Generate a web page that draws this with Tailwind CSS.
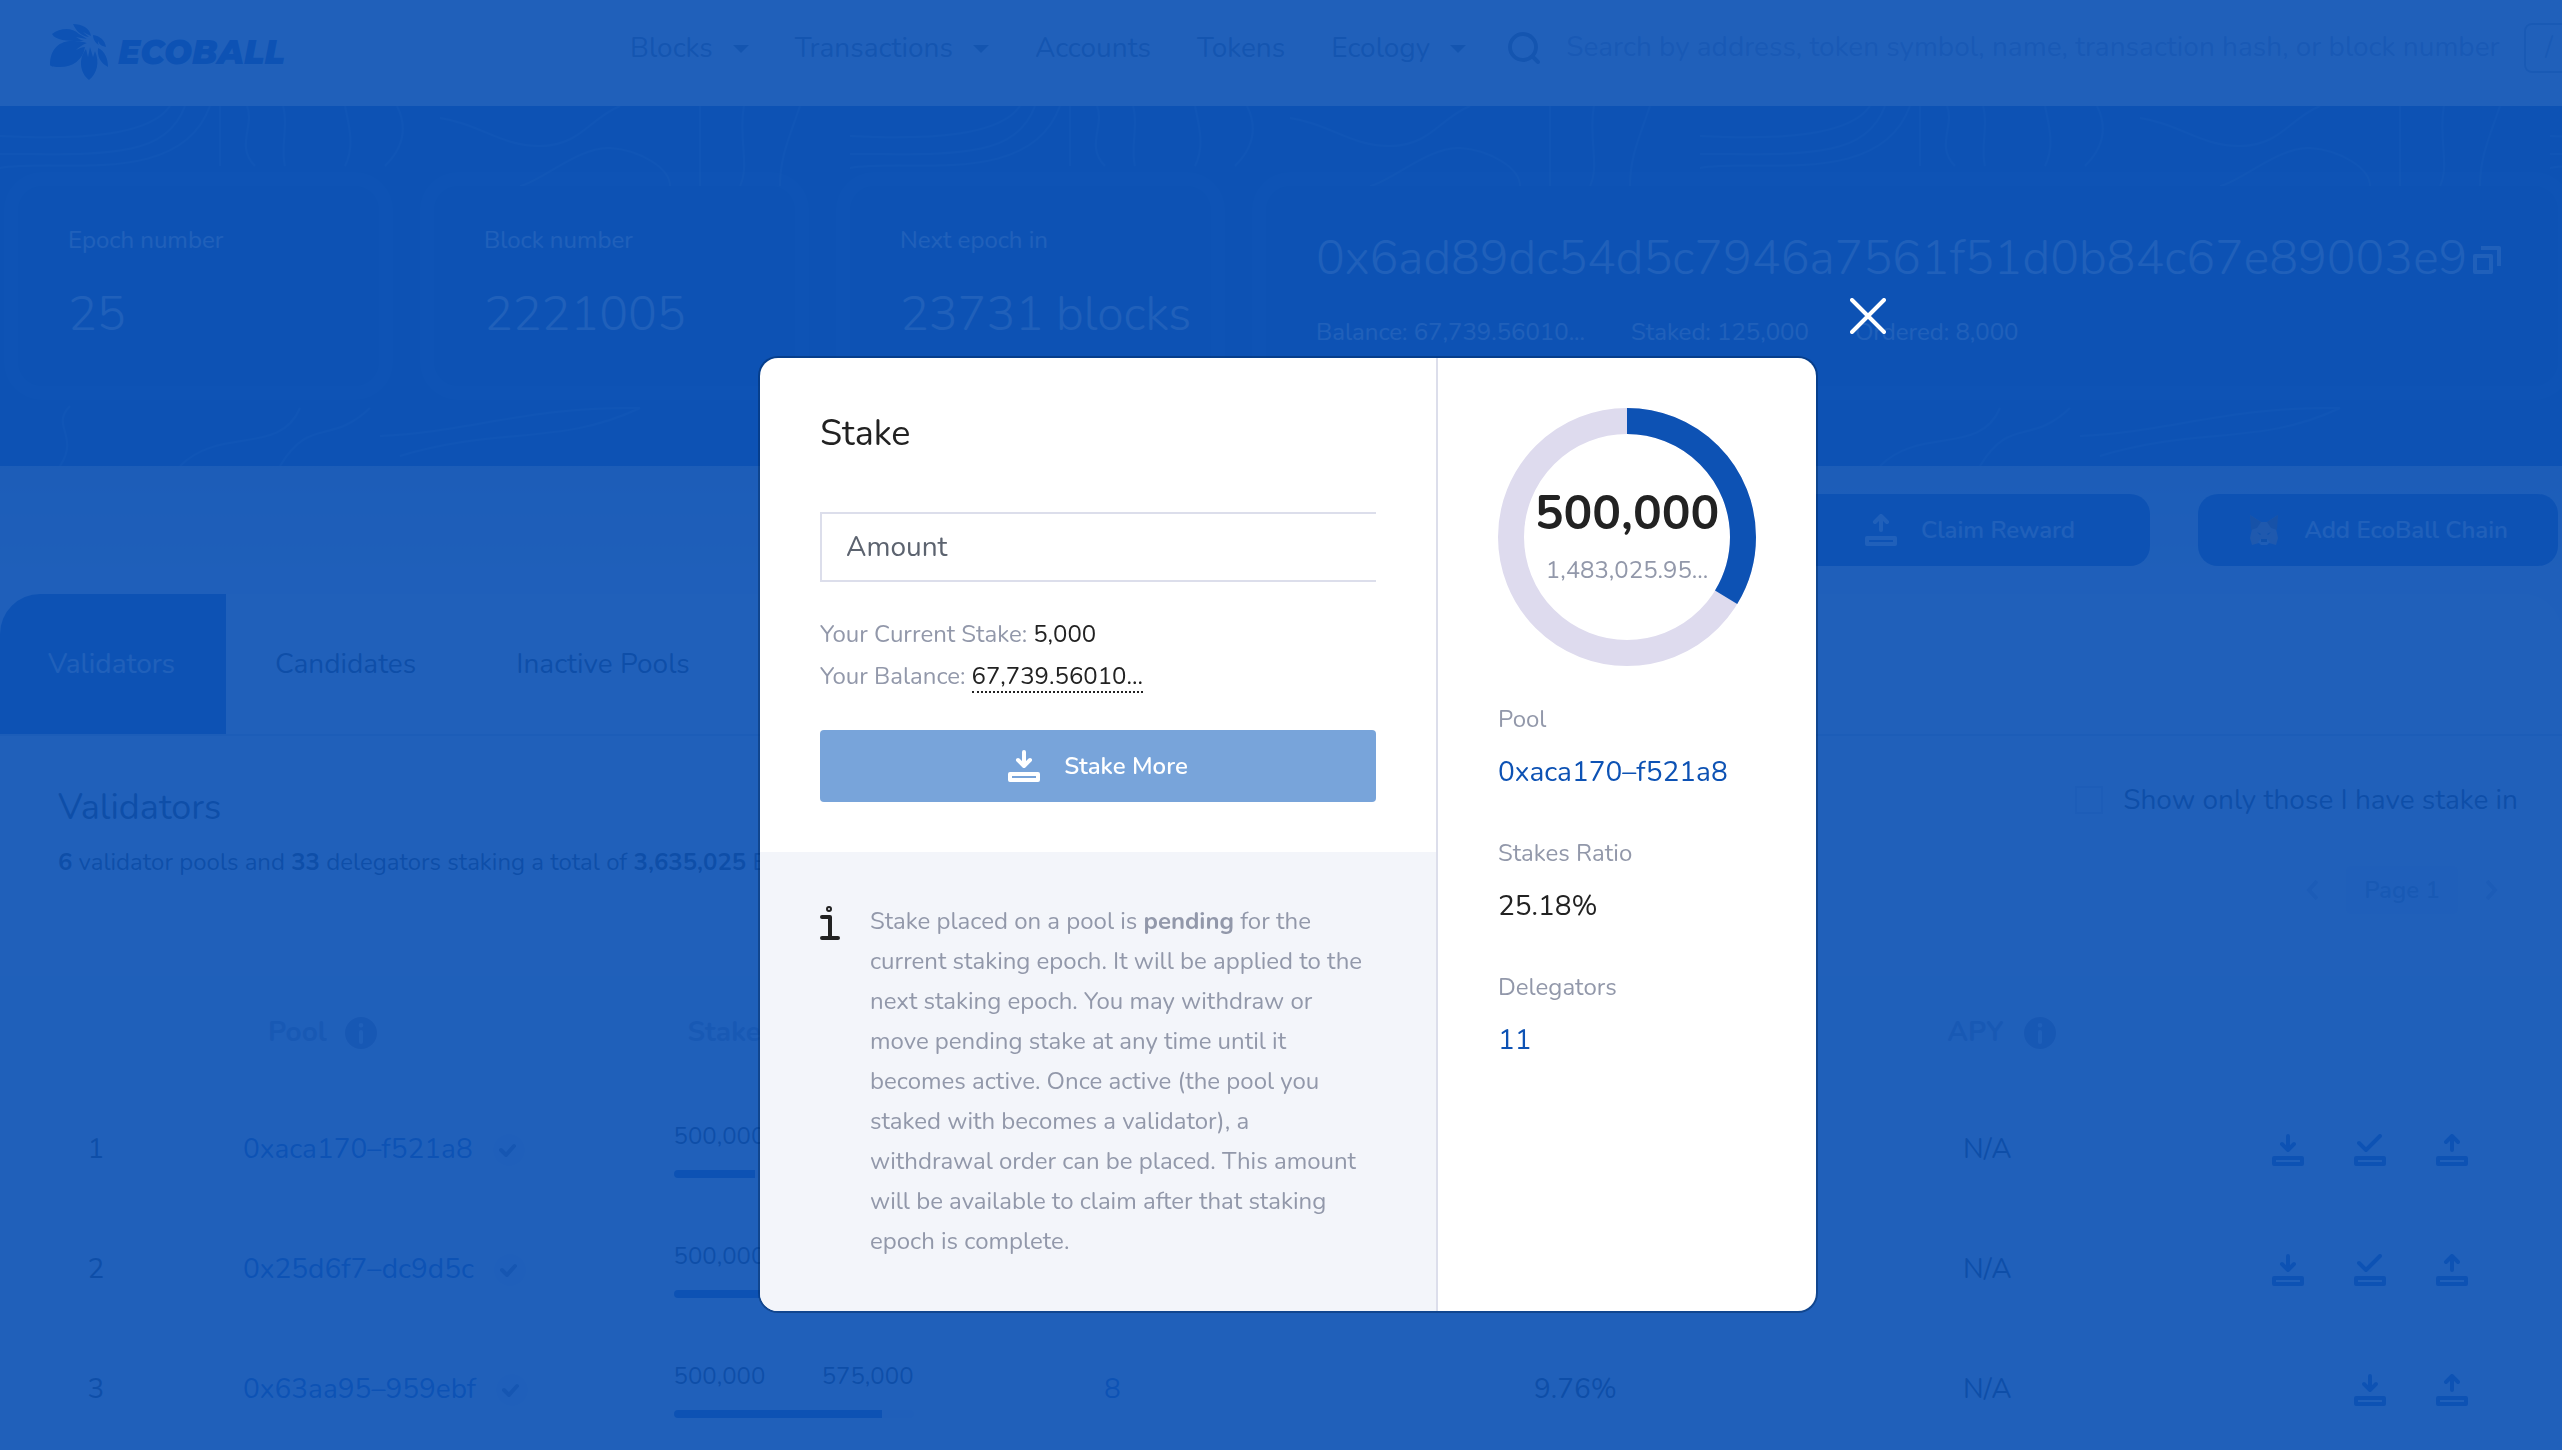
<!DOCTYPE html>
<html lang="en">
<head>
<meta charset="utf-8">
<meta name="viewport" content="width=device-width, initial-scale=1">
<title>EcoBall Staking</title>
<script src="https://cdn.jsdelivr.net/npm/@tailwindcss/browser@4"></script>
</head>
<body class="bg-[#eef1f7] font-[Nunito,Lato,sans-serif] text-2xl text-[#222222] overflow-hidden">

<!-- shared icons -->
<svg class="hidden" aria-hidden="true">
  <symbol id="i-stake" viewBox="0 0 32 32"><path d="M16 2v13M10 10l6 6 6-6" fill="none" stroke="currentColor" stroke-width="4" stroke-linecap="round" stroke-linejoin="round"/><path fill="currentColor" fill-rule="evenodd" d="M2 22h28a2 2 0 0 1 2 2v6a2 2 0 0 1-2 2H2a2 2 0 0 1-2-2v-6a2 2 0 0 1 2-2zm2 4v2h24v-2z"/></symbol>
  <symbol id="i-claim" viewBox="0 0 32 32"><path d="M16 16V3M10 8l6-6 6 6" fill="none" stroke="currentColor" stroke-width="4" stroke-linecap="round" stroke-linejoin="round"/><path fill="currentColor" fill-rule="evenodd" d="M2 22h28a2 2 0 0 1 2 2v6a2 2 0 0 1-2 2H2a2 2 0 0 1-2-2v-6a2 2 0 0 1 2-2zm2 4v2h24v-2z"/></symbol>
  <symbol id="i-order" viewBox="0 0 32 32"><path d="M5 9l7 7L26 2" fill="none" stroke="currentColor" stroke-width="4" stroke-linecap="round" stroke-linejoin="round"/><path fill="currentColor" fill-rule="evenodd" d="M2 22h28a2 2 0 0 1 2 2v6a2 2 0 0 1-2 2H2a2 2 0 0 1-2-2v-6a2 2 0 0 1 2-2zm2 4v2h24v-2z"/></symbol>
  <symbol id="i-info" viewBox="0 0 32 32"><path fill="currentColor" fill-rule="evenodd" d="M16 0a16 16 0 1 1 0 32 16 16 0 0 1 0-32zm0 6a2.300 2.300 0 1 0 0 4.600A2.300 2.300 0 0 0 16 6zm-2 9v10a2 2 0 0 0 4 0V15a2 2 0 0 0-4 0z"/></symbol>
  <symbol id="i-check" viewBox="0 0 32 32"><circle cx="16" cy="16" r="16" fill="#eef1f7"/><path d="M8 16l5 5 8-9" fill="none" stroke="#7a8296" stroke-width="4" stroke-linecap="round" stroke-linejoin="round"/></symbol>
</svg>

<div class="min-h-screen">
  <header class="flex h-[106px] items-center bg-white pl-[49px] pb-[10px] text-[28px] text-[#6b7285] overflow-hidden">
    <a href="#" class="flex items-center pt-2" aria-label="EcoBall">
      <svg class="h-[60px] w-[240px] shrink-0" viewBox="49 20 240 60" fill="#0d52b4">
        <path d="M50 63c0-17 10-24 22-24 8 0 12 1 15 2-5 2-8 4-11 7 4-2 6-3 9-3-2 14-14 21-27 20-5 0-8-1-8-2z"/>
        <path d="M52 32c8-6 20-7 27 0 3 2 6 3 8 5-4-1-8-1-11-2 3 2 5 3 8 4-9 0-28 1-32-7z"/>
        <path d="M73 22c9 0 17 4 18 12-4-2-6-3-8-4 2 2 4 3 6 5-8-1-13-6-16-13z"/>
        <path d="M93 33c7 1 12 5 13 12-5-1-7-3-8-6 0 2 0 3 1 4-4-2-6-6-6-10z"/>
        <path d="M98 46c7 3 10 11 10 19-8-4-11-11-10-19z"/>
        <path d="M86 47l2 8 2-10 3 10 2-6c5 11 2 23-6 29-9-7-11-21-3-31z"/>
        <text x="118" y="62" font-family="Montserrat, Inter, sans-serif" font-weight="900" font-style="italic" font-size="33">ECOBALL</text>
      </svg>
    </a>
    <nav class="ml-[341px] flex shrink-0 items-center gap-[46px] pt-0.5">
      <button class="flex items-center gap-5">Blocks <svg class="h-2 w-4" viewBox="0 0 16 8" fill="currentColor"><path d="M0 0h16L8 8z"/></svg></button>
      <button class="flex items-center gap-5">Transactions <svg class="h-2 w-4" viewBox="0 0 16 8" fill="currentColor"><path d="M0 0h16L8 8z"/></svg></button>
      <a href="#">Accounts</a>
      <a href="#">Tokens</a>
      <button class="flex items-center gap-5">Ecology <svg class="h-2 w-4" viewBox="0 0 16 8" fill="currentColor"><path d="M0 0h16L8 8z"/></svg></button>
    </nav>
    <form class="ml-[42px] flex flex-1 items-center" role="search">
      <svg class="h-8 w-8 shrink-0" viewBox="0 0 32 32" fill="none" stroke="currentColor" stroke-width="4" stroke-linecap="round"><circle cx="15" cy="15" r="13"/><path d="M25 25l5 5"/></svg>
      <input type="search" aria-label="Search" class="ml-[26px] min-w-0 flex-1 placeholder:text-[#a0a7ba]" placeholder="Search by address, token symbol, name, transaction hash, or block number">
      <kbd class="-mr-3 flex h-[50px] w-[50px] shrink-0 items-center justify-center rounded-lg border-2 border-[#a9b0c2] font-[Nunito,Lato,sans-serif] text-[#a9b0c2]">/</kbd>
    </form>
  </header>

  <section class="relative h-[360px] overflow-hidden bg-[#0d52b4] text-white">
    <svg class="absolute inset-0 h-full w-full" fill="none" stroke="#3a74c6" stroke-width="2" aria-hidden="true">
      <defs><pattern id="contours" width="850" height="360" patternUnits="userSpaceOnUse">
        <path d="M0 30c80 4 150 0 170-30M0 48c100 0 165 6 185-48M0 62c60-10 180 20 210-62M220 60V0M255 60c-20-20 0-40-8-60M285 60c-5-20 4-40-2-60M345 60c10-20 4-40 0-60M385 60c20-20 22-40 12-60M440 12c40 6 60 28 100 28s50-28 80-40M520 80c20-4 60-40 90-38s60 20 60 38M700 80V0M740 80c10-20-2-50 4-80M780 80c0-30 10-50 20-80M60 360c20-30-10-40 10-60M180 360c40-40 100-10 120-58M280 360c30-50 50-20 90-58M400 350c100-30 160-10 240-48M380 330c90-4 150-30 260-28"/>
      </pattern></defs>
      <rect width="100%" height="100%" fill="url(#contours)" stroke="none"/>
    </svg>
    <div class="relative flex gap-[55px] pl-[18px] pr-1 pt-20">
      <article class="flex h-[200px] w-[361px] shrink-0 flex-col rounded-3xl bg-[#0d52b4] px-[50px] pt-[36px] shadow-[0_0_0_14px_rgba(255,255,255,0.06)]">
        <h2 class="leading-9">Epoch number</h2><p class="mt-7 text-5xl leading-14 font-light">25</p>
      </article>
      <article class="flex h-[200px] w-[361px] shrink-0 flex-col rounded-3xl bg-[#0d52b4] px-[50px] pt-[36px] shadow-[0_0_0_14px_rgba(255,255,255,0.06)]">
        <h2 class="leading-9">Block number</h2><p class="mt-7 text-5xl leading-14 font-light">2221005</p>
      </article>
      <article class="flex h-[200px] w-[361px] shrink-0 flex-col whitespace-nowrap rounded-3xl bg-[#0d52b4] px-[50px] pt-[36px] shadow-[0_0_0_14px_rgba(255,255,255,0.06)]">
        <h2 class="leading-9">Next epoch in</h2><p class="mt-7 text-5xl leading-14 font-light">23731 blocks</p>
      </article>
      <article class="flex h-[200px] min-w-0 flex-1 flex-col whitespace-nowrap rounded-3xl bg-[#0d52b4] px-[50px] pt-11 shadow-[0_0_0_14px_rgba(255,255,255,0.06)]">
        <p class="flex items-center gap-1.5 text-5xl leading-14 font-light">0x6ad89dc54d5c7946a7561f51d0b84c67e89003e9
          <button aria-label="Copy address" class="pt-1"><svg class="h-7 w-7" viewBox="0 0 28 28" fill="none" stroke="currentColor" stroke-width="4" stroke-linejoin="round"><path d="M2 10h16v16H2zM8 2h18v18"/></svg></button></p>
        <p class="mt-7 flex gap-[46px] leading-9"><span>Balance: 67,739.56010...</span><span>Staked: 125,000</span><span>Ordered: 8,000</span></p>
      </article>
    </div>
  </section>

  <div class="flex h-32 justify-end gap-12 bg-linear-to-b from-[#cfd6e4] to-[#f0f2f8] pr-1 pt-7">
    <button class="flex h-[72px] w-[360px] items-center justify-center gap-6 rounded-[20px] bg-[#0d52b4] font-semibold text-white"><svg class="h-8 w-8"><use href="#i-claim"/></svg>Claim Reward</button>
    <button class="flex h-[72px] w-[360px] items-center justify-center gap-6 rounded-[20px] bg-[#0d52b4] font-semibold text-white">
      <svg class="h-8 w-8" viewBox="0 0 32 32"><path fill="#e8a46a" d="M2 1l11 7h6l11-7-2 14 2 9-2 7-7-2h-10l-7 2-2-7 2-9z"/><path fill="#8a4a1c" d="M2 1l11 7-4 6-6 2zM30 1l-11 7 4 6 6 2z"/><path fill="#e6d8cc" d="M10 28l3 3h6l3-3-3-3h-6z"/><path fill="#233447" d="M13 25h6v3h-6zM9 18l4 2-1 1zM23 18l-4 2 1 1z"/></svg>Add EcoBall Chain</button>
  </div>

  <main class="rounded-t-[40px] bg-white">
    <div role="tablist" class="flex h-[142px] overflow-hidden rounded-t-[40px] border-b-2 border-[#cdd1de] text-[28px]">
      <button role="tab" aria-selected="true" class="bg-[#0d52b4] pt-0.5 pr-[51px] pl-12 text-white">Validators</button>
      <button role="tab" aria-selected="false" class="px-[49px] pt-0.5">Candidates</button>
      <button role="tab" aria-selected="false" class="px-[51px] pt-0.5">Inactive Pools</button>
    </div>
    <section class="flex h-60 justify-between pl-[58px] pr-11">
      <div class="pt-12">
        <h1 class="text-4xl leading-12">Validators</h1>
        <p class="mt-3 leading-9"><b>6</b> validator pools and <b>33</b> delegators staking a total of <b>3,635,025</b> EBC</p>
      </div>
      <div class="flex flex-col items-end pt-11">
        <label class="flex items-center gap-5 text-[28px] leading-10"><input type="checkbox" class="h-7 w-7 appearance-none border-2 border-[#d0d4e0] bg-white">Show only those I have stake in</label>
        <div class="mt-[46px] flex items-center gap-7 pr-5 text-[#98a0b4]">
          <button aria-label="Previous page"><svg class="h-5 w-3" viewBox="0 0 12 20" fill="none" stroke="#c6cbd8" stroke-width="4"><path d="M11 1L3 10l8 9"/></svg></button>
          <span class="flex h-12 w-28 items-center justify-center rounded bg-[#f1f3f8] font-semibold">Page 1</span>
          <button aria-label="Next page"><svg class="h-5 w-3" viewBox="0 0 12 20" fill="none" stroke="#c6cbd8" stroke-width="4"><path d="M1 1l8 9-8 9"/></svg></button>
        </div>
      </div>
    </section>

    <table class="w-full table-fixed text-[28px]">
      <colgroup><col class="w-[192px]"><col class="w-[17%]"><col class="w-[13%]"><col class="w-[12%]"><col class="w-[24%]"><col class="w-[8%]"><col></colgroup>
      <thead>
        <tr class="h-[114px] bg-[#f3f5fa] text-left text-[#98a0b4]">
          <th></th>
          <th class="pl-[76px]"><span class="flex items-center gap-[18px]">Pool <svg class="h-8 w-8 text-[#8f97ab]"><use href="#i-info"/></svg></span></th>
          <th class="pl-[60px]">Stake</th>
          <th></th>
          <th></th>
          <th><span class="flex items-center justify-center gap-5 pl-8">APY <svg class="h-8 w-8 shrink-0 text-[#8f97ab]"><use href="#i-info"/></svg></span></th>
          <th></th>
        </tr>
      </thead>
      <tbody class="text-center">
        <tr class="h-[120px]">
          <td>1</td>
          <td class="pl-[51px]"><span class="flex items-center gap-5"><a href="#" class="text-[#0d52b4]">0xaca170–f521a8</a><svg class="h-8 w-8"><use href="#i-check"/></svg></span></td>
          <td class="px-[46px] text-2xl"><div class="flex w-60 flex-col gap-[18px] pb-0.5"><div class="flex justify-between leading-8"><span>500,000</span></div><div class="h-2 overflow-hidden rounded bg-[#eceff6]"><div class="h-2 bg-[#0d52b4]" style="width:34%"></div></div></div></td>
          <td></td><td></td><td class="pl-1">N/A</td>
          <td class="pr-[94px]"><div class="flex justify-end gap-[50px] text-[#0d52b4]"><button aria-label="Stake"><svg class="h-8 w-8"><use href="#i-stake"/></svg></button><button aria-label="Order withdrawal"><svg class="h-8 w-8"><use href="#i-order"/></svg></button><button aria-label="Claim"><svg class="h-8 w-8"><use href="#i-claim"/></svg></button></div></td>
        </tr>
        <tr class="h-[120px] bg-[#fafbfd]">
          <td>2</td>
          <td class="pl-[51px]"><span class="flex items-center gap-5"><a href="#" class="text-[#0d52b4]">0x25d6f7–dc9d5c</a><svg class="h-8 w-8"><use href="#i-check"/></svg></span></td>
          <td class="px-[46px] text-2xl"><div class="flex w-60 flex-col gap-[18px] pb-0.5"><div class="flex justify-between leading-8"><span>500,000</span></div><div class="h-2 overflow-hidden rounded bg-[#eceff6]"><div class="h-2 bg-[#0d52b4]" style="width:83%"></div></div></div></td>
          <td></td><td></td><td class="pl-1">N/A</td>
          <td class="pr-[94px]"><div class="flex justify-end gap-[50px] text-[#0d52b4]"><button aria-label="Stake"><svg class="h-8 w-8"><use href="#i-stake"/></svg></button><button aria-label="Order withdrawal"><svg class="h-8 w-8"><use href="#i-order"/></svg></button><button aria-label="Claim"><svg class="h-8 w-8"><use href="#i-claim"/></svg></button></div></td>
        </tr>
        <tr class="h-[120px]">
          <td>3</td>
          <td class="pl-[51px]"><span class="flex items-center gap-5"><a href="#" class="text-[#0d52b4]">0x63aa95–959ebf</a><svg class="h-8 w-8"><use href="#i-check"/></svg></span></td>
          <td class="px-[46px] text-2xl"><div class="flex w-60 flex-col gap-[18px] pb-0.5"><div class="flex justify-between leading-8"><span>500,000</span><span>575,000</span></div><div class="h-2 overflow-hidden rounded bg-[#eceff6]"><div class="h-2 bg-[#0d52b4]" style="width:87%"></div></div></div></td>
          <td class="pr-1"><a href="#" class="text-[#0d52b4]">8</a></td><td>9.76%</td><td class="pl-1">N/A</td>
          <td class="pr-[94px]"><div class="flex justify-end gap-[50px] text-[#0d52b4]"><button aria-label="Stake"><svg class="h-8 w-8"><use href="#i-stake"/></svg></button><button aria-label="Claim"><svg class="h-8 w-8"><use href="#i-claim"/></svg></button></div></td>
        </tr>
      </tbody>
    </table>
  </main>
</div>

<!-- modal -->
<div class="fixed inset-0 flex items-start justify-center bg-[#0d52b4]/92 pl-[14px] pt-[358px]">
  <div role="dialog" aria-modal="true" aria-labelledby="dlg-title" class="relative flex w-[1056px] rounded-[18px] bg-white shadow-[0_0_0_2px_rgba(0,40,90,0.45)]">
    <button class="absolute -top-[60px] -right-[70px] h-9 w-9 text-white" aria-label="Close"><svg viewBox="0 0 36 36" fill="none" stroke="currentColor" stroke-width="4" stroke-linecap="round"><path d="M2 2l32 32M34 2L2 34"/></svg></button>

    <div class="flex w-[678px] shrink-0 flex-col border-r-2 border-[#dcdeeb]">
      <form class="flex flex-col px-[60px] pt-[50px] pb-[50px]">
        <h2 id="dlg-title" class="text-4xl leading-[52px]">Stake</h2>
        <input type="text" aria-label="Amount" placeholder="Amount" class="mt-[52px] h-[70px] border-2 border-r-0 border-[#dcdeeb] pl-6 text-[28px] placeholder:text-[#5c636f]">
        <dl class="mt-[31px] flex flex-col text-[#9298aa]">
          <div class="flex h-[42px] gap-1.5 leading-[42px]"><dt>Your Current Stake:</dt><dd class="text-[#222222]">5,000</dd></div>
          <div class="flex h-[42px] gap-1.5 leading-[42px]"><dt>Your Balance:</dt><dd class="h-[38px] border-b-2 border-dotted border-[#222222] text-[#222222]">67,739.56010...</dd></div>
        </dl>
        <button type="button" class="mt-[33px] flex h-[72px] items-center justify-center gap-6 rounded bg-[#78a4da] font-semibold text-white"><svg class="h-8 w-8"><use href="#i-stake"/></svg>Stake More</button>
      </form>
      <div class="flex flex-1 rounded-bl-[18px] bg-[#f3f5fa] px-[60px] pt-[49px] pb-[50px]">
        <svg class="mt-1 h-9 w-5 shrink-0" viewBox="0 0 20 36" fill="none" stroke="#222222" stroke-width="4" stroke-linecap="round" stroke-linejoin="round" aria-hidden="true"><path d="M2 12h8v20M2 33h16"/><circle cx="9" cy="4" r="1"/></svg>
        <p class="ml-[30px] leading-10 text-[#9298aa]">Stake placed on a pool is <b>pending</b> for the<br>current staking epoch. It will be applied to the<br>next staking epoch. You may withdraw or<br>move pending stake at any time until it<br>becomes active. Once active (the pool you<br>staked with becomes a validator), a<br>withdrawal order can be placed. This amount<br>will be available to claim after that staking<br>epoch is complete.</p>
      </div>
    </div>

    <aside class="flex flex-1 flex-col items-start px-[60px] pt-[50px]">
      <div class="relative h-[258px] w-[258px]">
        <svg class="h-[258px] w-[258px] -rotate-90" viewBox="0 0 258 258" fill="none" stroke-width="26"><circle cx="129" cy="129" r="116" stroke="#dedbee"/><circle cx="129" cy="129" r="116" stroke="#0d52b4" pathLength="1000" stroke-dasharray="337 663"/></svg>
        <div class="absolute inset-0 flex flex-col items-center pt-[75px]"><strong class="text-5xl leading-[60px]">500,000</strong><span class="mt-1.5 leading-[42px] text-[#9298aa]">1,483,025.95...</span></div>
      </div>
      <dl class="mt-[35px] flex flex-col gap-[43px]">
        <div><dt class="leading-9 text-[#9298aa]">Pool</dt><dd class="mt-[15px] text-[28px] leading-10"><a href="#" class="text-[#0d52b4]">0xaca170–f521a8</a></dd></div>
        <div><dt class="leading-9 text-[#9298aa]">Stakes Ratio</dt><dd class="mt-[15px] text-[28px] leading-10">25.18%</dd></div>
        <div><dt class="leading-9 text-[#9298aa]">Delegators</dt><dd class="mt-[15px] text-[28px] leading-10"><a href="#" class="text-[#0d52b4]">11</a></dd></div>
      </dl>
    </aside>
  </div>
</div>
</body>
</html>
